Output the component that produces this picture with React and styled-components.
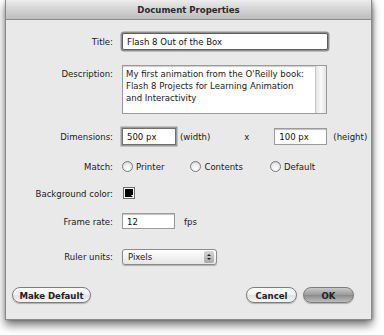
import styled, { createGlobalStyle } from 'styled-components';

const Global = createGlobalStyle`
  html, body { margin: 0; padding: 0; background: #ffffff; }
  body {
    font-family: "DejaVu Sans Condensed", "DejaVu Sans", "Liberation Sans", sans-serif;
    font-size: 9.5px;
    color: #1a1a1a;
  }
`;

const Page = styled.div`
  width: 384px;
  height: 335px;
  padding: 0 12px 0 5px;
  box-sizing: border-box;
`;

const Dialog = styled.div`
  width: 367px;
  height: 320px;
  background: #e9e9e9;
  border: 1px solid #8a8a8a;
  border-top: none;
  box-sizing: border-box;
  box-shadow: 0 5px 9px rgba(0,0,0,0.55), 1px 0 3px rgba(0,0,0,0.3);
  display: flex;
  flex-direction: column;
`;

const TitleBar = styled.div`
  height: 19px;
  background: linear-gradient(#ececec 0%, #d8d8d8 40%, #bdbdbd 100%);
  border-bottom: 1px solid #8c8c8c;
  display: flex;
  align-items: center;
  justify-content: center;
  font-weight: bold;
  font-size: 9.5px;
  color: #2a2a2a;
`;

const Form = styled.div`
  flex: 1;
  display: flex;
  flex-direction: column;
`;

const Row = styled.div`
  display: flex;
  align-items: ${p => (p.$top ? 'flex-start' : 'center')};
  margin-top: ${p => p.$mt}px;
  height: ${p => p.$h}px;
`;

const Label = styled.div`
  width: 107px;
  text-align: right;
  padding-top: ${p => (p.$top ? '3px' : '0')};
  flex-shrink: 0;
`;

const Controls = styled.div`
  display: flex;
  align-items: center;
  margin-left: 9px;
`;

const TextBox = styled.div`
  width: ${p => p.$w}px;
  height: ${p => p.$h || 17}px;
  margin-left: ${p => p.$ml || 0}px;
  background: #fff;
  box-sizing: border-box;
  border: 1px solid ${p => (p.$focus ? '#6f6f6f' : '#9a9a9a')};
  box-shadow: ${p => (p.$focus ? '0 0 0 1.5px #9b9b9b' : 'inset 0 1px 1px rgba(0,0,0,0.25)')};
  padding: 0 4px;
  display: flex;
  align-items: center;
  color: #111;
`;

const TitleBox = styled(TextBox)`
  box-shadow: 0 0 0 1.5px #8f8f8f;
  border-color: #5e5e5e;
  border-radius: 2px;
`;

const Area = styled.div`
  width: 205px;
  height: 49px;
  background: #fff;
  box-sizing: border-box;
  border: 1px solid #9a9a9a;
  box-shadow: inset 0 1px 1px rgba(0,0,0,0.2);
  display: flex;
`;

const AreaText = styled.div`
  flex: 1;
  padding: 2px 3px;
  line-height: 12px;
`;

const Scroll = styled.div`
  width: 10px;
  background: linear-gradient(90deg, #e4e4e4, #fafafa 50%, #e4e4e4);
  border-left: 1px solid #c8c8c8;
`;

const Unit = styled.span`
  margin-left: ${p => p.$ml}px;
`;

const Radio = styled.label`
  display: flex;
  align-items: center;
  gap: 3px;
  margin-right: ${p => p.$mr || 0}px;
`;

const Circle = styled.span`
  width: 11px;
  height: 11px;
  border-radius: 50%;
  border: 1px solid #7a7a7a;
  box-sizing: border-box;
  background: radial-gradient(circle at 50% 70%, #ffffff 0%, #e8e8e8 60%, #bdbdbd 100%);
`;

const Swatch = styled.div`
  width: 12px;
  height: 12px;
  margin-left: 1px;
  border: 1px solid #6a6a6a;
  background: #f4f4f4;
  box-sizing: border-box;
  padding: 1px;
  position: relative;
  span {
    display: block;
    width: 100%;
    height: 100%;
    background: #000;
  }
  &::after {
    content: '';
    position: absolute;
    right: 0;
    bottom: 0;
    border-left: 3px solid transparent;
    border-top: 3px solid #fff;
  }
`;

const Select = styled.div`
  width: 95px;
  height: 16px;
  box-sizing: border-box;
  border: 1px solid #8a8a8a;
  border-radius: 3px;
  background: linear-gradient(#ffffff, #f2f2f2 50%, #e6e6e6);
  box-shadow: 0 1px 1px rgba(0,0,0,0.25);
  display: flex;
  align-items: center;
  padding-left: 5px;
  position: relative;
`;

const Arrows = styled.div`
  position: absolute;
  right: 2px;
  top: 1px;
  bottom: 1px;
  width: 10px;
  border-radius: 2px;
  background: linear-gradient(#d5d5d5, #a9a9a9);
  display: flex;
  flex-direction: column;
  align-items: center;
  justify-content: center;
  gap: 2px;
  &::before, &::after {
    content: '';
    border-left: 2px solid transparent;
    border-right: 2px solid transparent;
  }
  &::before { border-bottom: 2px solid #222; }
  &::after { border-top: 2px solid #222; }
`;

const Footer = styled.div`
  display: flex;
  align-items: center;
  margin-top: auto;
  margin-bottom: 16px;
  padding: 0 17px 0 6px;
`;

const Button = styled.button`
  font: inherit;
  font-size: 9.5px;
  font-weight: bold;
  color: #222;
  width: ${p => p.$w}px;
  height: 16px;
  margin-left: ${p => p.$ml || 0}px;
  padding: 0;
  border-radius: 8px;
  border: 1px solid #7d7d7d;
  background: ${p =>
    p.$default
      ? 'linear-gradient(#c9c9c9, #9a9a9a 50%, #8a8a8a 51%, #bdbdbd)'
      : 'linear-gradient(#ffffff, #f0f0f0 50%, #e2e2e2 51%, #f4f4f4)'};
  box-shadow: 0 1px 1px rgba(0,0,0,0.25);
`;

const Spacer = styled.div`
  flex: 1;
`;

export default function App() {
  return (
    <Page>
      <Global />
      <Dialog>
        <TitleBar>Document Properties</TitleBar>
        <Form>
          <Row $mt={12} $h={18}>
            <Label>Title:</Label>
            <Controls>
              <TitleBox $w={206} $h={17}>Flash 8 Out of the Box</TitleBox>
            </Controls>
          </Row>
          <Row $mt={15} $h={49} $top>
            <Label $top>Description:</Label>
            <Controls>
              <Area>
                <AreaText>
                  My first animation from the O'Reilly book: Flash 8 Projects for Learning Animation and Interactivity
                </AreaText>
                <Scroll />
              </Area>
            </Controls>
          </Row>
          <Row $mt={14} $h={17}>
            <Label>Dimensions:</Label>
            <Controls>
              <TextBox $w={54} $focus>500 px</TextBox>
              <Unit $ml={4}>(width)</Unit>
              <Unit $ml={34}>x</Unit>
              <TextBox $w={53} $ml={25}>100 px</TextBox>
              <Unit $ml={6}>(height)</Unit>
            </Controls>
          </Row>
          <Row $mt={14} $h={14}>
            <Label>Match:</Label>
            <Controls>
              <Radio $mr={26}><Circle />Printer</Radio>
              <Radio $mr={27}><Circle />Contents</Radio>
              <Radio><Circle />Default</Radio>
            </Controls>
          </Row>
          <Row $mt={13} $h={14}>
            <Label>Background color:</Label>
            <Controls>
              <Swatch><span /></Swatch>
            </Controls>
          </Row>
          <Row $mt={13} $h={16}>
            <Label>Frame rate:</Label>
            <Controls>
              <TextBox $w={53} $h={16}>12</TextBox>
              <Unit $ml={9}>fps</Unit>
            </Controls>
          </Row>
          <Row $mt={19} $h={17}>
            <Label>Ruler units:</Label>
            <Controls>
              <Select>
                Pixels
                <Arrows />
              </Select>
            </Controls>
          </Row>
          <Footer>
            <Button $w={79}>Make Default</Button>
            <Spacer />
            <Button $w={51}>Cancel</Button>
            <Button $w={51} $ml={6} $default>OK</Button>
          </Footer>
        </Form>
      </Dialog>
    </Page>
  );
}
